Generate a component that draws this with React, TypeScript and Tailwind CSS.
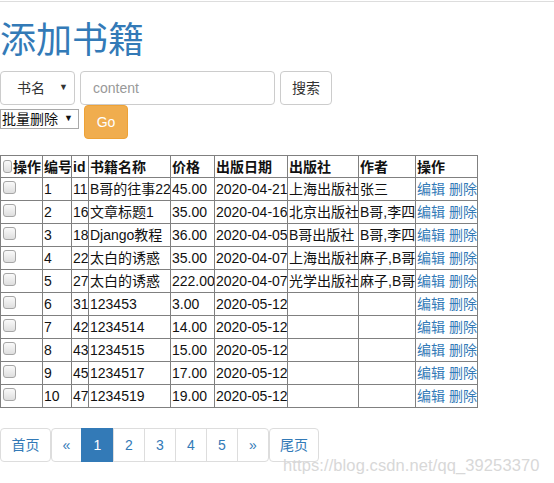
const books = [
  { no: 1, id: 11, name: "B哥的往事22", price: "45.00", date: "2020-04-21", press: "上海出版社", author: "张三" },
  { no: 2, id: 16, name: "文章标题1", price: "35.00", date: "2020-04-16", press: "北京出版社", author: "B哥,李四" },
  { no: 3, id: 18, name: "Django教程", price: "36.00", date: "2020-04-05", press: "B哥出版社", author: "B哥,李四" },
  { no: 4, id: 22, name: "太白的诱惑", price: "35.00", date: "2020-04-07", press: "上海出版社", author: "麻子,B哥" },
  { no: 5, id: 27, name: "太白的诱惑", price: "222.00", date: "2020-04-07", press: "光学出版社", author: "麻子,B哥" },
  { no: 6, id: 31, name: "123453", price: "3.00", date: "2020-05-12", press: "", author: "" },
  { no: 7, id: 42, name: "1234514", price: "14.00", date: "2020-05-12", press: "", author: "" },
  { no: 8, id: 43, name: "1234515", price: "15.00", date: "2020-05-12", press: "", author: "" },
  { no: 9, id: 45, name: "1234517", price: "17.00", date: "2020-05-12", press: "", author: "" },
  { no: 10, id: 47, name: "1234519", price: "19.00", date: "2020-05-12", press: "", author: "" },
];

const headers = ["编号", "id", "书籍名称", "价格", "出版日期", "出版社", "作者", "操作"];
const colWidths = ["w-[42px]", "w-[29px]", "w-[17px]", "w-[82px]", "w-[44px]", "w-[73px]", "w-[71px]", "w-[57px]", "w-[62px]"];

function Box() {
  return (
    <span className="inline-block w-[13px] h-[13px] mt-[3px] ml-px mr-px align-top rounded-[3px] border border-[#a6a6a6] bg-gradient-to-b from-[#fafafa] to-[#dedede]" />
  );
}

const cell = "border border-[#808080] px-px whitespace-nowrap overflow-hidden text-left align-middle leading-5";

export default function App() {
  return (
    <div
      className="relative w-[554px] h-[483px] bg-white text-[14px] text-[#333] overflow-hidden"
      style={{ fontFamily: '"Liberation Sans", "Noto Sans CJK SC", sans-serif' }}
    >
      <div className="mt-px h-px bg-[#dddddd]" />
      <h1 className="mt-[19px] mb-[10px] text-[36px] leading-[40px] text-[#337ab7] font-normal">添加书籍</h1>

      <div className="flex gap-[5px] h-[34px]">
        <div className="w-[75px] h-[34px] border border-[#ccc] rounded-[4px] flex items-center pl-[16px] pr-[6px] justify-between">
          <span>书名</span>
          <span className="text-[9px] text-[#333]">▼</span>
        </div>
        <div className="w-[195px] h-[34px] border border-[#ccc] rounded-[4px] flex items-center pl-[12px] text-[#999]">content</div>
        <div className="w-[52px] h-[34px] border border-[#ccc] rounded-[4px] flex items-center justify-center">搜索</div>
      </div>

      <div className="flex items-start gap-[5px]">
        <div className="mt-[4px] w-[79px] h-[20px] border border-[#a9a9a9] flex items-center pl-px pr-[5px] justify-between text-[#111]">
          <span>批量删除</span>
          <span className="text-[9px]">▼</span>
        </div>
        <div className="w-[44px] h-[34px] rounded-[4px] bg-[#f0ad4e] border border-[#eea236] text-white flex items-center justify-center">Go</div>
      </div>

      <table className="mt-[16px] table-fixed border-collapse border border-[#222] w-[477px]">
        <colgroup>
          {colWidths.map((w, i) => (
            <col key={i} className={w} />
          ))}
        </colgroup>
        <thead>
          <tr className="h-[22px] font-bold text-[#111]">
            <th className={cell}>
              <div className="flex items-start">
                <Box />
                <span>操作</span>
              </div>
            </th>
            {headers.map((h, i) => (
              <th key={i} className={cell}>{h}</th>
            ))}
          </tr>
        </thead>
        <tbody className="text-[#111]">
          {books.map((b) => (
            <tr key={b.id} className="h-[23px]">
              <td className={cell + " align-top"}><Box /></td>
              <td className={cell}>{b.no}</td>
              <td className={cell}>{b.id}</td>
              <td className={cell}>{b.name}</td>
              <td className={cell}>{b.price}</td>
              <td className={cell}>{b.date}</td>
              <td className={cell}>{b.press}</td>
              <td className={cell}>{b.author}</td>
              <td className={cell + " text-[#337ab7]"}>
                <a>编辑</a> <a>删除</a>
              </td>
            </tr>
          ))}
        </tbody>
      </table>

      <div className="mt-[20px] flex text-[#337ab7]">
        <div className="w-[51px] h-[34px] border border-[#ddd] rounded-[4px] flex items-center justify-center">首页</div>
        <div className="flex">
          <div className="w-[31px] h-[34px] border border-[#ddd] rounded-l-[4px] flex items-center justify-center">«</div>
          <div className="-ml-px w-[33px] h-[34px] border border-[#337ab7] bg-[#337ab7] text-white flex items-center justify-center">1</div>
          {[2, 3, 4, 5].map((n) => (
            <div key={n} className="-ml-px w-[32px] h-[34px] border border-[#ddd] flex items-center justify-center">{n}</div>
          ))}
          <div className="-ml-px w-[32px] h-[34px] border border-[#ddd] rounded-r-[4px] flex items-center justify-center">»</div>
        </div>
        <div className="w-[50px] h-[34px] border border-[#ddd] rounded-[4px] flex items-center justify-center">尾页</div>
      </div>

      <div className="absolute left-[283px] top-[453px] text-[16.5px] text-[#d8d8d8] tracking-[0.1px]">https://blog.csdn.net/qq_39253370</div>
    </div>
  );
}
